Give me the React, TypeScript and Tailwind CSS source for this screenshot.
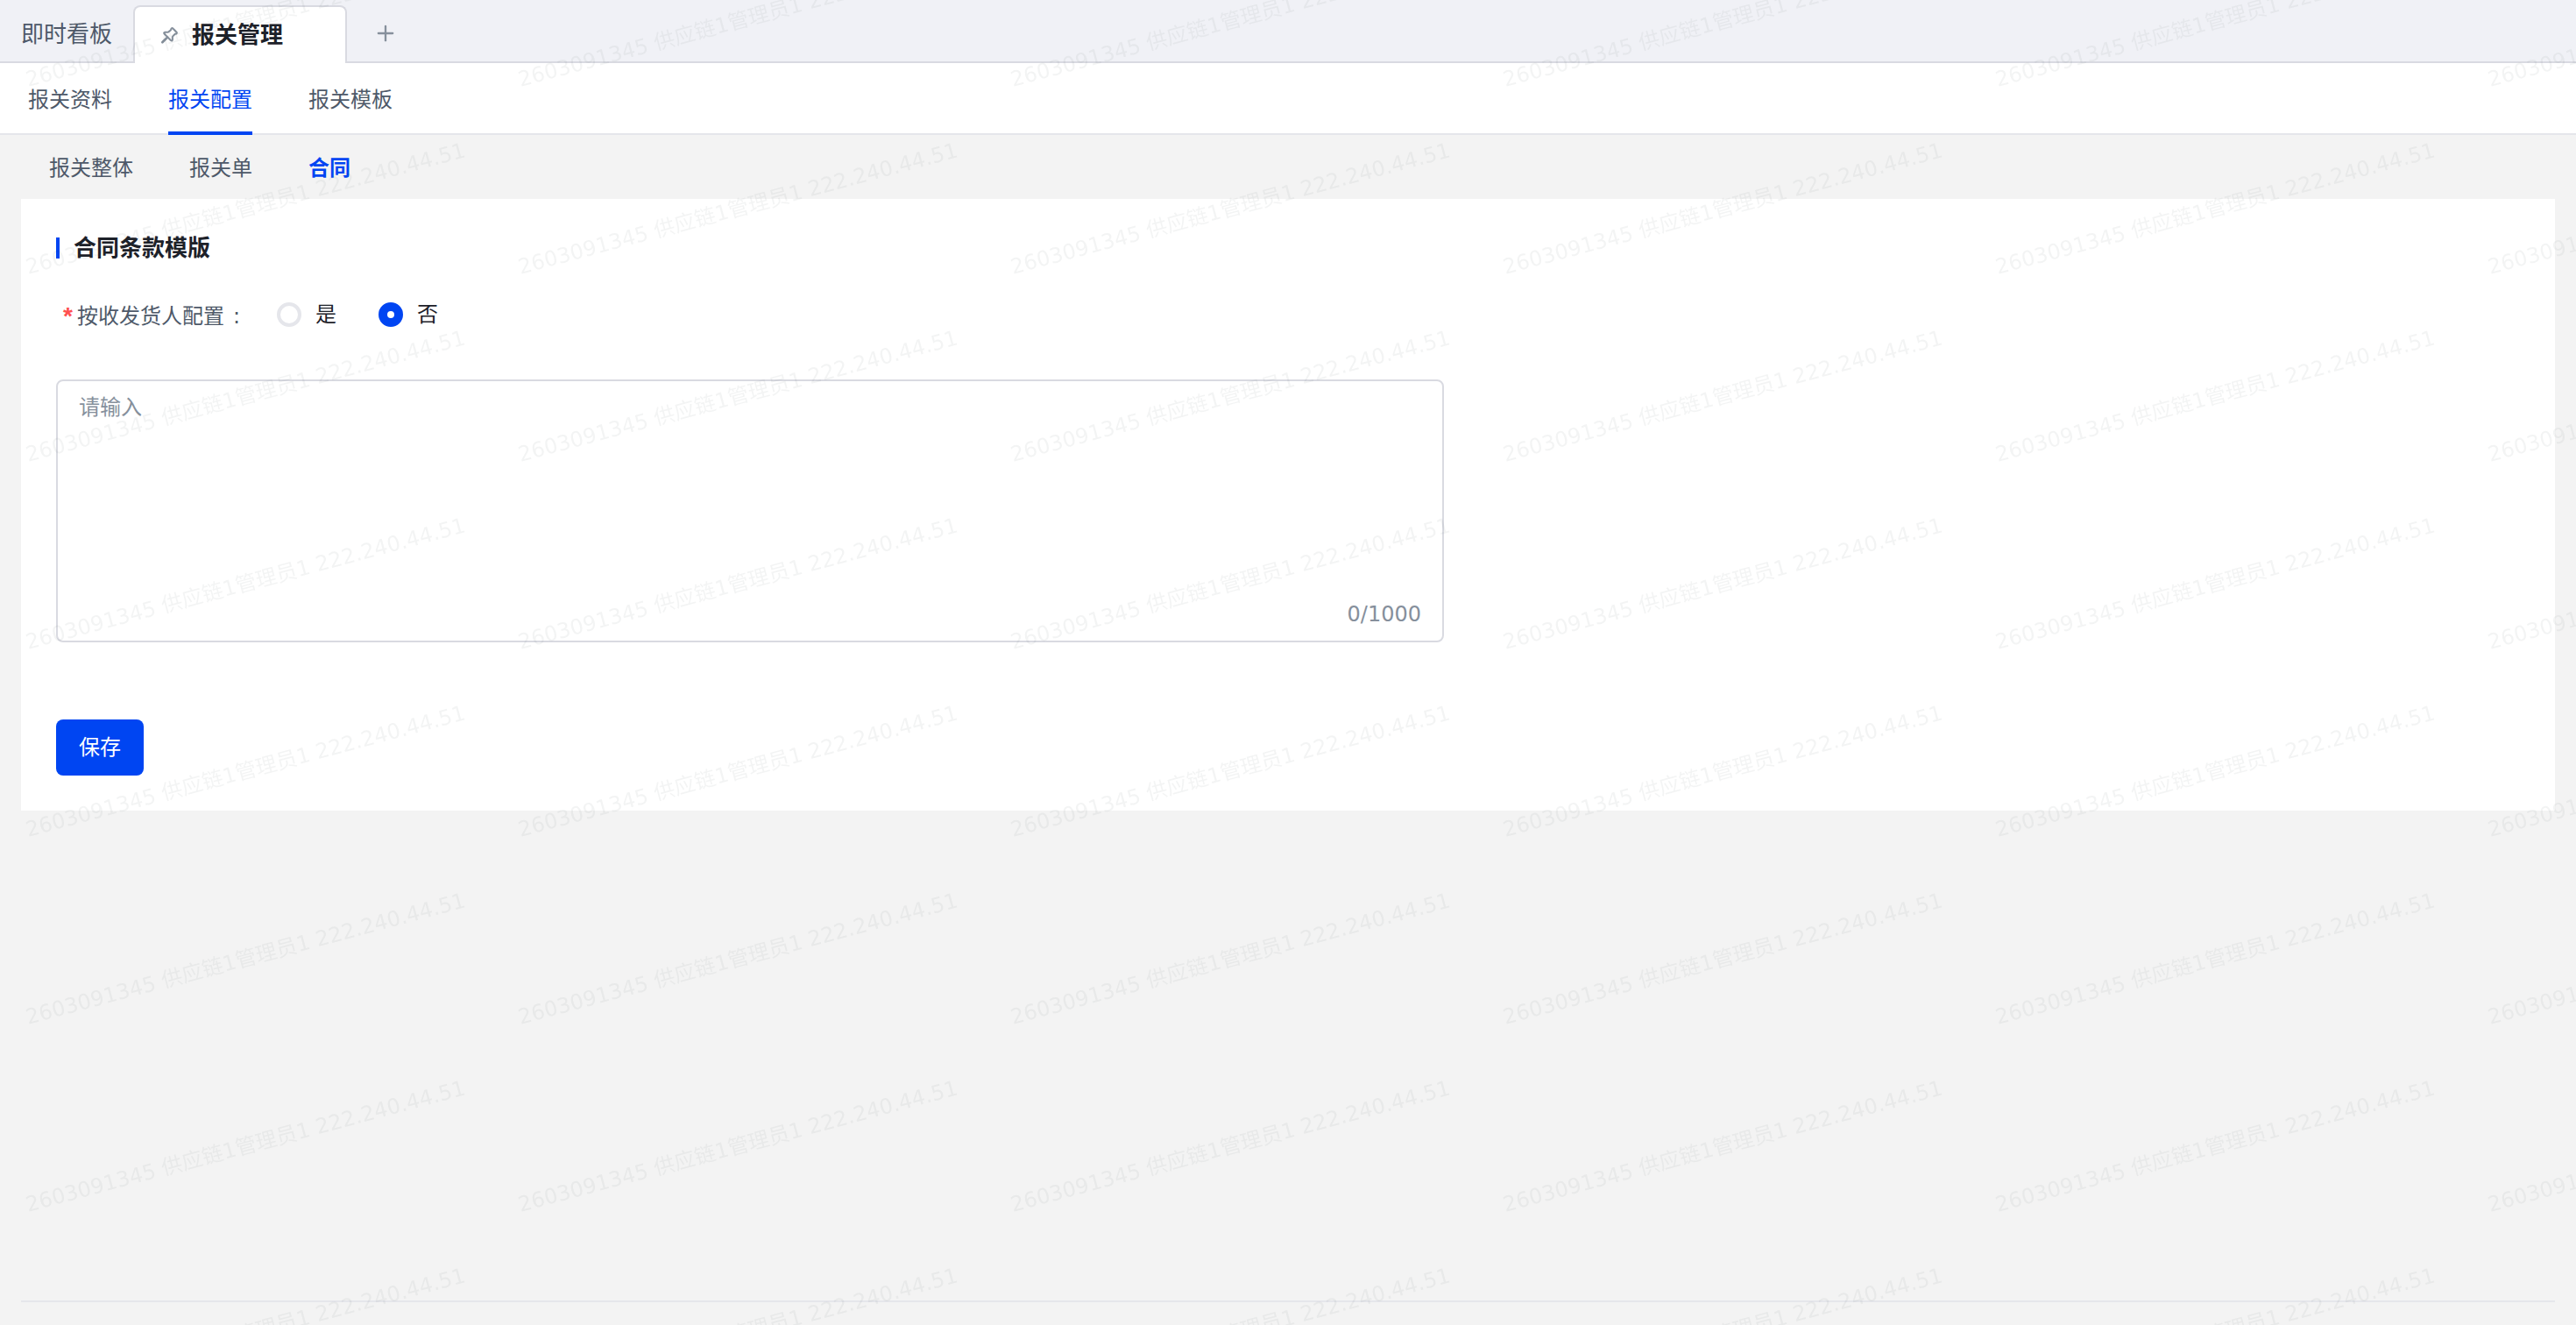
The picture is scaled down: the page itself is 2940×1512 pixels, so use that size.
import { useState } from "react";
import { Plus } from "lucide-react";

const navItems = ["报关资料", "报关配置", "报关模板"];
const subItems = ["报关整体", "报关单", "合同"];
const MAX_LENGTH = 1000;

const PinIcon = () => (
  <svg
    viewBox="0 0 56 56"
    className="size-[19px] text-[#86909c]"
    fill="none"
    stroke="currentColor"
    strokeWidth="6"
    strokeLinecap="round"
    strokeLinejoin="round"
    aria-hidden="true"
  >
    <path d="M34 5Q37 2 40 5L51 16Q54 19 51 22L46 23L38 32V42Q37 48 32 44L11 23Q7 18 13 17H23L32 10Z" />
    <path d="M20 35L4 51" strokeWidth="8" />
  </svg>
);

const Watermark = () => (
  <svg
    className="pointer-events-none absolute inset-0 h-full w-full"
    aria-hidden="true"
  >
    <defs>
      <pattern
        id="watermark"
        y="-70"
        width="562"
        height="214"
        patternUnits="userSpaceOnUse"
      >
        <text
          transform="translate(32 169) rotate(-15)"
          fontSize="24"
          fill="#1d2129"
          fillOpacity="0.05"
        >
          2603091345 供应链1管理员1 222.240.44.51
        </text>
      </pattern>
    </defs>
    <rect width="100%" height="100%" fill="url(#watermark)" />
  </svg>
);

const TabBar = () => (
  <div className="flex h-[72px] items-end bg-[#f0f1f6]">
    <div className="flex h-full w-[152px] items-center border-b-2 border-[#d9dae1] pl-6 pt-2">
      <button className="text-[26px] leading-9 text-[#4e5969]">即时看板</button>
    </div>
    <div className="flex h-[66px] w-[244px] items-center gap-4 rounded-t-lg border-2 border-b-0 border-[#d9dae1] bg-white pl-[30px]">
      <PinIcon />
      <button className="text-[26px] font-bold leading-9 text-[#1d2129]">
        报关管理
      </button>
    </div>
    <div className="flex h-full flex-1 items-center border-b-2 border-[#d9dae1] pl-[30px] pt-1.5">
      <button aria-label="新建标签" className="text-[#86909c]">
        <Plus className="size-7" />
      </button>
    </div>
  </div>
);

const App = () => {
  const [perConsignee, setPerConsignee] = useState("否");
  const [terms, setTerms] = useState("");

  return (
    <div className="relative flex min-h-screen flex-col bg-[#f3f3f3] font-['DejaVu_Sans','Noto_Sans_CJK_SC',sans-serif] text-2xl text-[#1d2129]">
      <TabBar />

      <nav className="flex h-[82px] gap-16 border-b-2 border-[#e5e6eb] bg-white px-8">
        {navItems.map((item) => (
          <a
            key={item}
            href="#"
            className={
              item === "报关配置"
                ? "-mb-0.5 border-b-4 border-[#0045f2] pt-6 leading-9 text-[#0045f2]"
                : "pt-6 leading-9 text-[#4e5969]"
            }
          >
            {item}
          </a>
        ))}
      </nav>

      <nav className="flex h-[73px] items-center gap-16 px-14 pt-0.5">
        {subItems.map((item) => (
          <a
            key={item}
            href="#"
            className={
              item === "合同" ? "font-bold text-[#0045f2]" : "text-[#4e5969]"
            }
          >
            {item}
          </a>
        ))}
      </nav>

      <main className="mx-6 bg-white px-10 pb-10 pt-9">
        <div className="flex items-center gap-4">
          <span className="h-6 w-1 bg-[#0045f2]" />
          <h2 className="text-[26px] font-bold leading-10">合同条款模版</h2>
        </div>

        <fieldset className="mt-9 flex h-10 items-center pl-2">
          <legend className="float-left flex items-center pt-1 text-[#4e5969]">
            <span className="mr-1 w-3 font-['Liberation_Sans',sans-serif] text-[28px] font-bold text-[#ff5050]">
              *
            </span>
            按收发货人配置
            <span className="ml-2.5">:</span>
          </legend>
          <div className="ml-[42px] flex gap-12">
            {["是", "否"].map((option) => (
              <label key={option} className="flex items-center gap-4">
                <input
                  type="radio"
                  name="perConsignee"
                  value={option}
                  checked={perConsignee === option}
                  onChange={() => setPerConsignee(option)}
                  className="size-7 appearance-none rounded-full border-4 border-[#e5e6eb] bg-white checked:border-[10px] checked:border-[#0045f2]"
                />
                {option}
              </label>
            ))}
          </div>
        </fieldset>

        <div className="relative mt-[54px] h-[300px] w-[1584px] max-w-full">
          <textarea
            aria-label="合同条款模版"
            placeholder="请输入"
            maxLength={MAX_LENGTH}
            value={terms}
            onChange={(e) => setTerms(e.target.value)}
            className="block h-full w-full resize-none rounded-lg border-2 border-[#d9dae1] bg-white px-6 py-3 leading-9 outline-none placeholder:text-[#86909c]"
          />
          <span className="absolute bottom-4 right-[26px] text-[#86909c]">
            {terms.length}/{MAX_LENGTH}
          </span>
        </div>

        <button className="mt-[88px] h-16 w-[100px] rounded-lg bg-[#0045f2] text-white">
          保存
        </button>
      </main>

      <footer className="mx-6 mt-auto h-7 border-t-2 border-[#e5e6eb]" />

      <Watermark />
    </div>
  );
};

export default App;
